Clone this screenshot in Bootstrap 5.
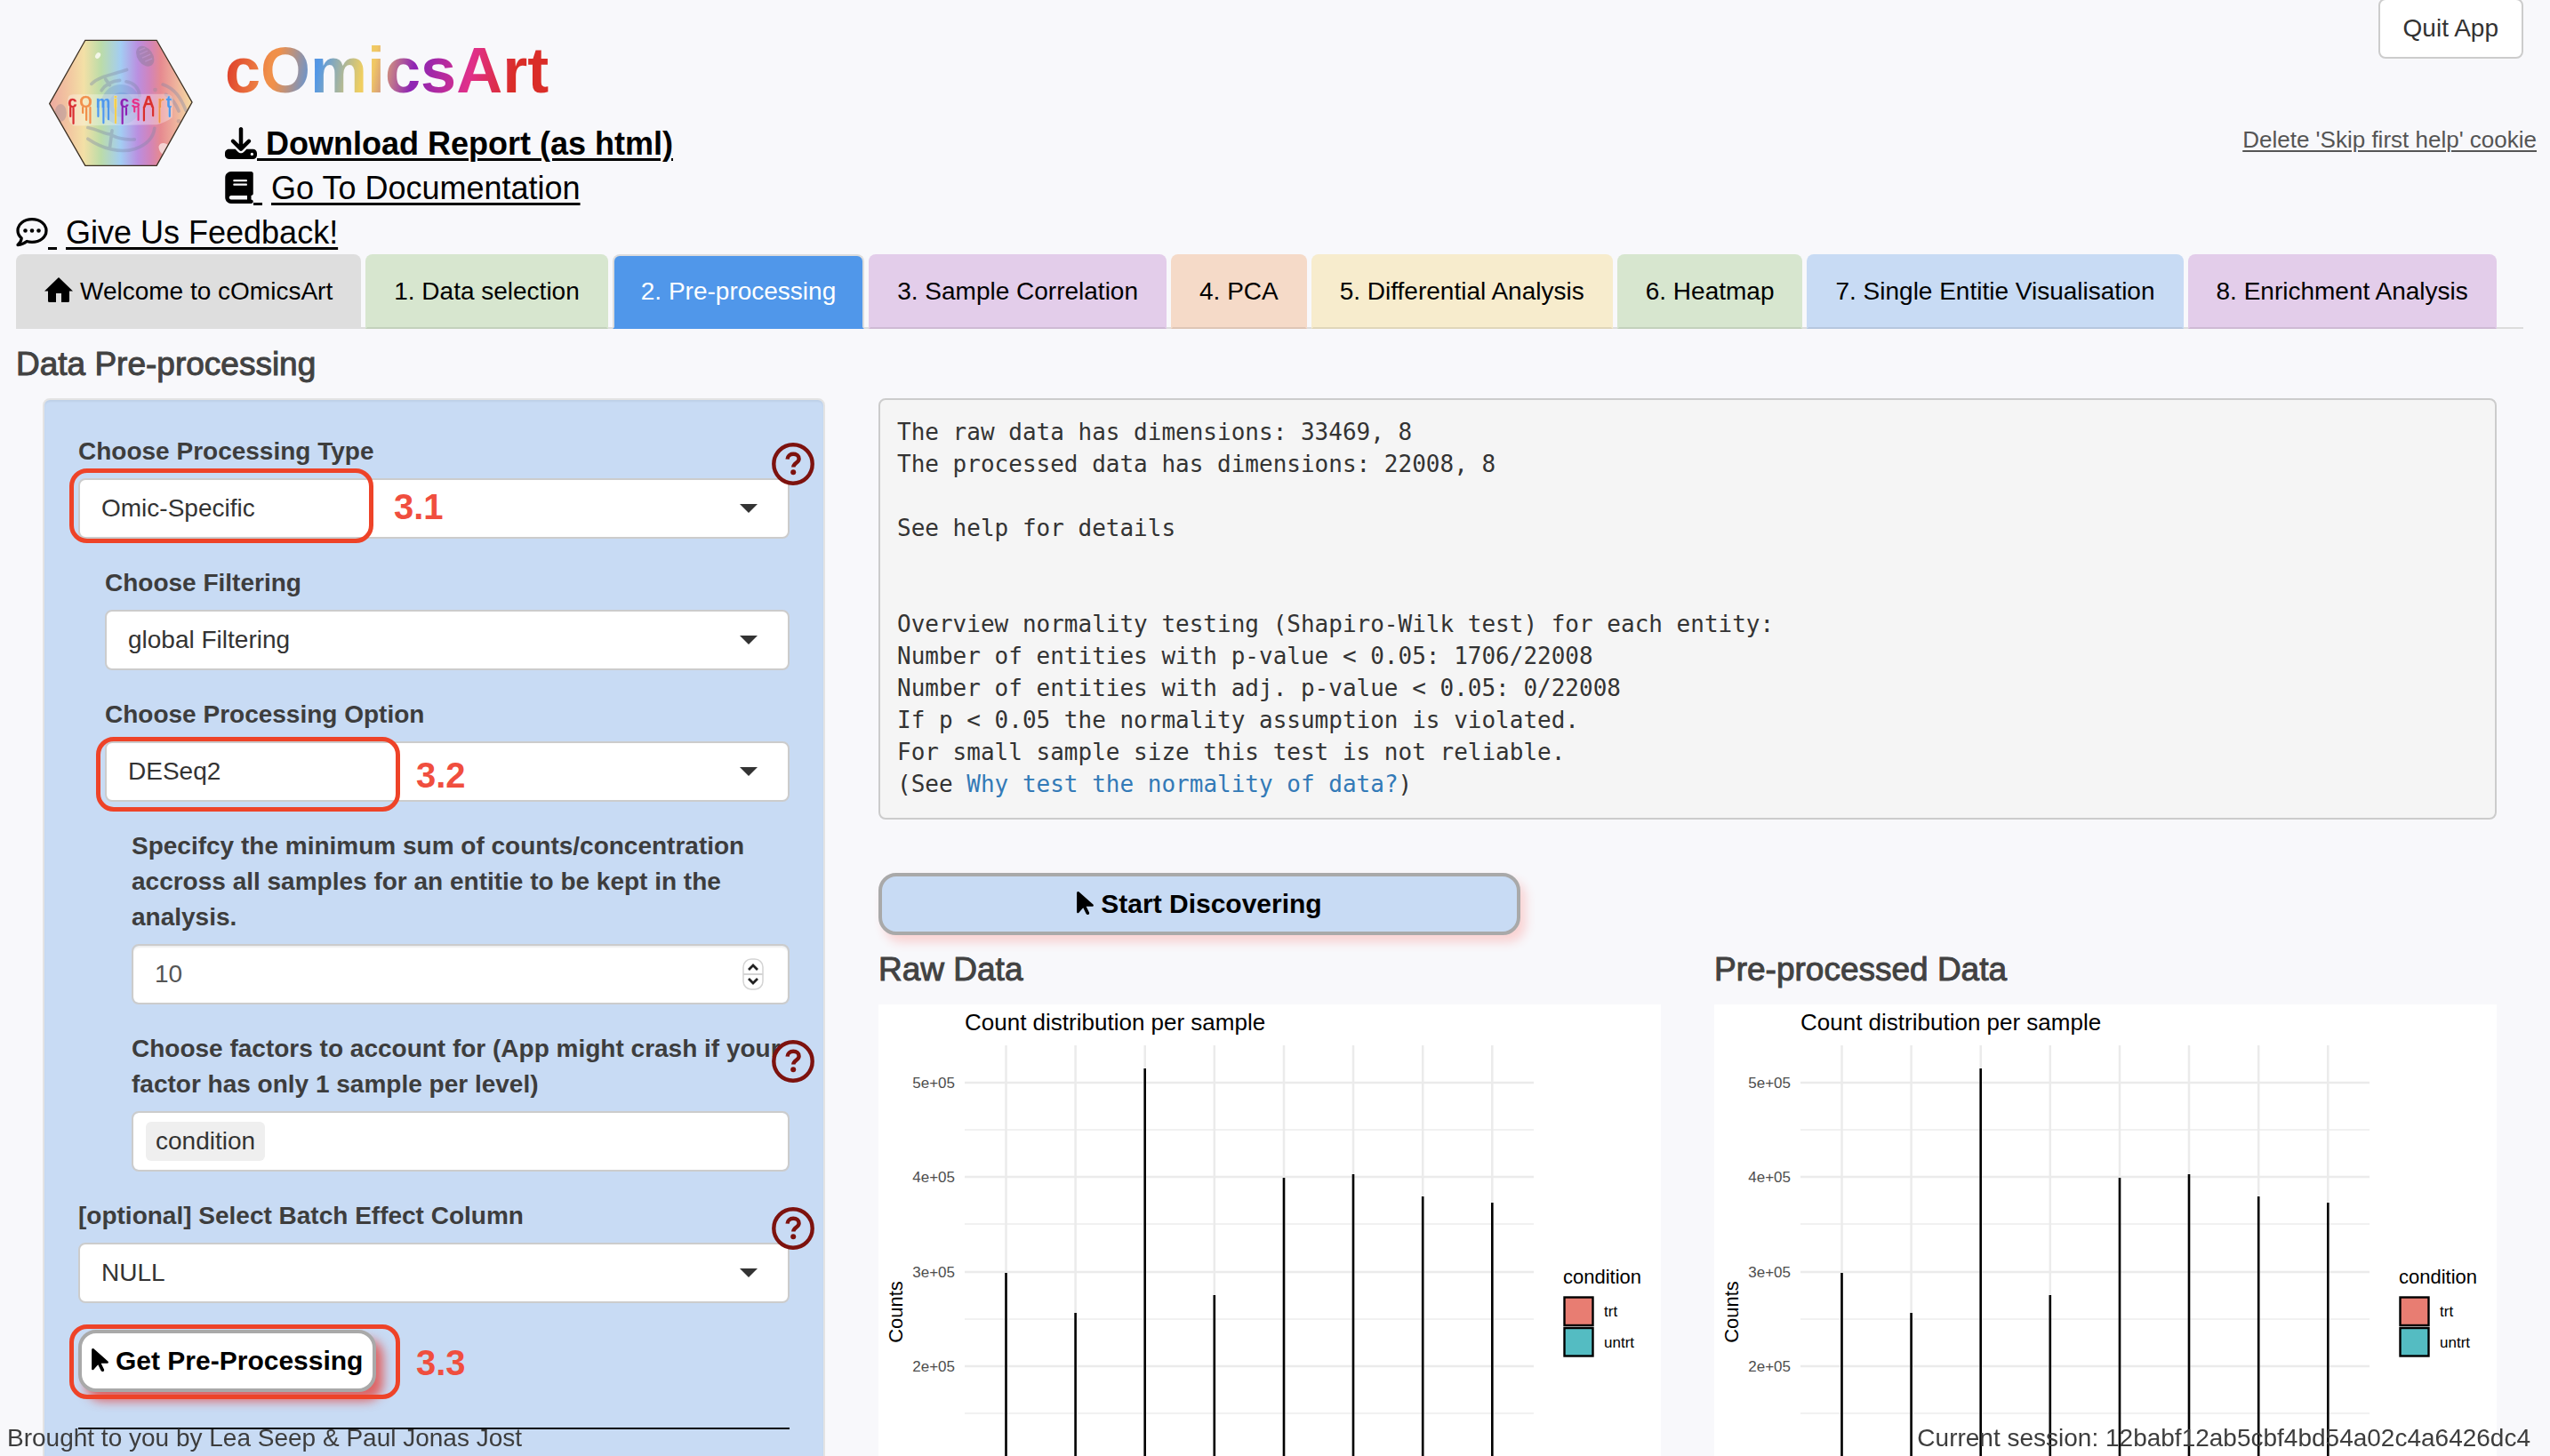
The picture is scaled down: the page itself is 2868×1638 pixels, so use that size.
<!DOCTYPE html>
<html lang="en">
<head>
<meta charset="utf-8">
<meta name="viewport" content="width=device-width, initial-scale=1">
<title>cOmicsArt</title>
<link href="https://cdn.jsdelivr.net/npm/bootstrap@5.3.0/dist/css/bootstrap.min.css" rel="stylesheet">
<style>
  body { font-family: "Liberation Sans", Arial, sans-serif; font-size: 28px; line-height: 40px; color: #3d3d3d; background: #f8f8fb; }
  .app-view { height: 100vh; overflow: hidden; }
  .app-head { padding: 0 15px 0 55px; }
  .app-logo { width: 162px; height: 144px; margin-top: 44px; margin-right: 36px; }
  .app-titles { padding-top: 40px; }
  .app-name { width: fit-content; font-size: 72px; line-height: 79px; font-weight: 700; margin-bottom: 17px; color: transparent; background: linear-gradient(100deg, #df402b 2%, #f0904a 15%, #f0904a 17%, #5096e8 29%, #f0cf60 43%, #f0c765 46%, #8e24b4 58%, #9a27ac 62%, #e0308a 75%, #da2d28 88%); -webkit-background-clip: text; background-clip: text; }
  .link-line { font-size: 36px; line-height: 52px; height: 50px; white-space: nowrap; }
  .big-link { color: #000; text-decoration-thickness: 3px; text-underline-offset: 4px; }
  .link-gap { display: inline-block; width: 10px; }
  .glyph { display: inline-block; width: 36px; height: 36px; vertical-align: -5px; fill: currentColor; }
  .glyph-book { width: 32px; }
  .app-feedback { padding-left: 18px; }
  .btn-quit { --bs-btn-font-size: 28px; --bs-btn-line-height: 40px; --bs-btn-padding-x: 26px; --bs-btn-padding-y: 12px; --bs-btn-border-width: 2px; --bs-btn-border-radius: 8px; --bs-btn-color: #333; --bs-btn-bg: #fff; --bs-btn-border-color: #ccc; margin: -2px 15px 71px 0; }
  .cookie-link { font-size: 26px; color: #555; text-decoration-thickness: 2px; text-underline-offset: 3px; }
  .app-body { padding: 0 30px 0 18px; }

  .flow-tabs { border-bottom: 2px solid #ddd; gap: 5px; flex-wrap: nowrap; }
  .flow-tabs .nav-link { padding: 20px 30px; line-height: 40px; color: #000; white-space: nowrap; border: 2px solid transparent; border-bottom-color: rgba(0,0,0,.09); border-radius: 8px 8px 0 0; margin-bottom: -2px; background-clip: border-box; background-origin: border-box; }
  .flow-tabs .tab-grey { background-color: #dedede; border-bottom-color: transparent; }
  .flow-tabs .tab-green { background-color: #d7e6cf; }
  .flow-tabs .tab-violet { background-color: #e3cdea; }
  .flow-tabs .tab-peach { background-color: #f5dac8; }
  .flow-tabs .tab-cream { background-color: #f7eccd; }
  .flow-tabs .tab-blue { background-color: #c8dbf4; }
  .flow-tabs .nav-link.active { background-color: #5097ea; color: #fff; border-color: #ddd #ddd #5097ea; }
  .home-glyph { display: inline-block; width: 32px; height: 28px; vertical-align: -3px; margin-right: 8px; }

  .head-text { font-size: 37px; line-height: 40px; font-weight: 400; color: #424242; -webkit-text-stroke: 1px currentColor; }
  .page-title { margin: 20px 0 18px; }
  .main-grid { --bs-gutter-x: 60px; margin: 0; }
  .plot-grid { --bs-gutter-x: 60px; }
  .side-well { background: #c8dbf4; border: 2px solid #e3e3e3; border-radius: 8px; padding: 38px; height: 1400px; box-shadow: inset 0 2px 2px rgba(0,0,0,.05); }
  .field { margin-bottom: 30px; }
  .field-1 { margin-left: 30px; }
  .field-2 { margin-left: 60px; }
  .field label { display: block; font-weight: 700; margin-bottom: 10px; white-space: nowrap; }
  .field .form-select, .field .form-control { height: 68px; font-size: 28px; line-height: 40px; padding: 12px 24px; border: 2px solid #ccc; border-radius: 8px; color: #333; background-color: #fff; }
  .field .form-select { background-image: url("data:image/svg+xml,%3Csvg xmlns='http://www.w3.org/2000/svg' viewBox='0 0 20 10'%3E%3Cpath d='M0 0h20L10 10z' fill='%23333'/%3E%3C/svg%3E"); background-size: 20px 10px; background-position: right 34px center; }
  .field input[type=number] { appearance: textfield; -moz-appearance: textfield; color: #555; box-shadow: inset 0 2px 2px rgba(0,0,0,.07); }
  .field input[type=number]::-webkit-inner-spin-button { display: none; }
  .spin { position: absolute; right: 29px; top: 16px; width: 24px; height: 36px; }
  .field .chip-box { padding: 10px 14px; }
  .chip { background: #efefef; border-radius: 6px; padding: 2px 11px; color: #333; }
  .chip-box input { border: 0; outline: 0; min-width: 0; background: none; }
  .help-btn { position: absolute; right: -28px; top: 10px; width: 48px; height: 48px; padding: 0; border: 0; background: none; display: block; line-height: 0; z-index: 3; }
  .go-btn { --bs-btn-font-size: 30px; --bs-btn-line-height: 42px; --bs-btn-font-weight: 700; --bs-btn-padding-x: 11px; --bs-btn-padding-y: 10px; --bs-btn-border-width: 4px; --bs-btn-border-radius: 20px; --bs-btn-color: #000; --bs-btn-bg: #fff; --bs-btn-border-color: #a9a9a9; --bs-btn-box-shadow: none; box-shadow: 8px 10px 12px rgba(232,50,40,.7); white-space: nowrap; }
  .go-btn svg { width: 19px; height: 30px; vertical-align: -4px; margin-right: 8px; }
  .go-wide { --bs-btn-bg: #c8dbf4; box-shadow: 6px 8px 12px rgba(255,60,50,.2); width: 722px; max-width: 100%; margin: 60px 0 19px; }
  .callout { position: absolute; z-index: 2; left: -10px; width: 342px; height: 84px; border: 5px solid #ee4328; border-radius: 20px; pointer-events: none; }
  .callout-no { position: absolute; z-index: 2; font-size: 40px; font-weight: 700; line-height: 40px; color: #f04e3e; pointer-events: none; }
  .c1 { top: -11px; } .n1 { left: 355px; top: 12px; }
  .c2 { top: -5px; }  .n2 { left: 350px; top: 18px; }
  .c3 { top: -6px; width: 372px; } .n3 { left: 380px; top: 17px; }
  .well-rule { border: 0; border-top: 2px solid #000; opacity: 1; margin: 40px 0 0; }

  .log { font-family: "DejaVu Sans Mono", Menlo, monospace; font-size: 26px; line-height: 36px; color: #333; background: #f5f5f5; border: 2px solid #ccc; border-radius: 8px; padding: 18px 19px 20px; margin: 0; }
  .log a { color: #337ab7; text-decoration: none; }
  .plot { display: block; width: 100%; height: auto; margin-top: 19px; background: #fff; }
  .plot text { font-family: "Liberation Sans", Arial, sans-serif; }
  .p-title { font-size: 26px; } .p-name { font-size: 22px; } .p-key { font-size: 17px; } .p-tick { font-size: 17px; fill: #4d4d4d; text-anchor: end; }
  .app-foot { padding: 0 22px 0 8px; pointer-events: none; }
  .logo-ink { filter: drop-shadow(0 0 2px #fff); }
  .logo-ink tspan { stroke-width: 1px; }
</style>
<script src="https://cdn.jsdelivr.net/npm/bootstrap@5.3.0/dist/js/bootstrap.bundle.min.js"></script>
</head>
<body>
<svg width="0" height="0" class="position-absolute" aria-hidden="true">
  <defs>
    <symbol id="pointer" viewBox="0 0 320 512"><path d="M0 55.2V426c0 12.2 9.9 22 22 22c6.3 0 12.4-2.7 16.6-7.5L121.2 346l58.1 116.3c7.9 15.8 27.1 22.2 42.9 14.3s22.2-27.1 14.3-42.9L179.8 320H297.9c12.2 0 22.1-9.9 22.1-22.1c0-6.3-2.7-12.3-7.4-16.5L38.6 37.9C34.3 34.1 28.9 32 23.2 32C10.4 32 0 42.4 0 55.2z"/></symbol>
    <symbol id="help" viewBox="0 0 48 48"><circle cx="24" cy="24" r="21.7" fill="none" stroke="#7d120e" stroke-width="4.4"/><path d="M17.6 18.6c.2-3.700 2.900-5.800 6.600-5.800 3.800 0 6.400 2.100 6.400 5.400 0 4.400-6.300 4.700-6.300 9.300" fill="none" stroke="#7d120e" stroke-width="4.400"/><circle cx="24.200" cy="33.300" r="3" fill="#7d120e"/></symbol>
    <g id="grid">
      <path d="M97 141H737M97 247H737M97 354H737M97 460H737" stroke="#ededed" stroke-width="1.500"/>
      <path d="M97 88H737M97 194H737M97 301H737M97 407H737M97 514H737M143.500 46V520M221.600 46V520M299.700 46V520M377.800 46V520M456 46V520M534 46V520M612.200 46V520M690.300 46V520" stroke="#ebebeb" stroke-width="2.500"/>
      <path d="M143.500 302V520M221.600 347V520M299.700 72V520M377.800 327V520M456 195V520M534 191V520M612.200 216V520M690.300 223V520" stroke="#000" stroke-width="2.600"/>
      <rect x="771.500" y="329.500" width="32" height="31.500" fill="#e87d72" stroke="#000" stroke-width="2.400"/>
      <rect x="771.500" y="364" width="32" height="31.500" fill="#54bcc2" stroke="#000" stroke-width="2.400"/>
    </g>
  </defs>
</svg>

<div class="app-view">
  <header>
    <div class="app-head d-flex align-items-start">
      <svg class="app-logo flex-shrink-0" viewBox="44 41 488 432" role="img" aria-label="cOmicsArt logo">
        <defs>
          <linearGradient id="rain"><stop offset="0" stop-color="#eda9a0"/><stop offset=".12" stop-color="#f2c3a0"/><stop offset=".24" stop-color="#f3e0a6"/><stop offset=".36" stop-color="#bcdca8"/><stop offset=".5" stop-color="#a3cdf3"/><stop offset=".62" stop-color="#ba8fe0"/><stop offset=".7" stop-color="#d084bd"/><stop offset=".78" stop-color="#e68a90"/><stop offset=".88" stop-color="#eeb09c"/><stop offset="1" stop-color="#f3dca2"/></linearGradient>
          <clipPath id="hex"><path d="M167 44H409L529 254 409 469H167L46 259z"/></clipPath>
        </defs>
        <g clip-path="url(#hex)">
          <path d="M167 44H409L529 254 409 469H167L46 259z" fill="url(#rain)"/>
          <g fill="none" stroke="#7d86a8" stroke-opacity=".38" stroke-width="11" stroke-linecap="round">
            <path d="M188 192C215 165 262 160 308 144M236 176l14 20M222 214c18-26 40-32 62-34M306 184c26 4 42 22 46 48M176 340c40 8 60 24 76 22M258 350l-8 60M176 378c50 34 110 50 160 34 40-14 62-40 66-70M256 366c30 14 54 16 78 14M430 194c42 14 62 48 78 88M440 228c26 16 36 36 44 56"/>
          </g>
          <circle cx="288" cy="262" r="68" fill="#6f94cc" opacity=".35"/><circle cx="290" cy="262" r="42" fill="#5f86d0" opacity=".25"/>
          <ellipse cx="370" cy="98" rx="26" ry="38" transform="rotate(-35 370 98)" fill="#8c7c9c" opacity=".5"/>
          <path d="M350 78l20-8M352 92l26-12M360 104l28-12M370 116l24-10" stroke="#b98fc6" stroke-width="4"/>
          <ellipse cx="84" cy="290" rx="20" ry="30" fill="#9c8a98" opacity=".4"/><circle cx="404" cy="212" r="7" fill="#9c8a98" opacity=".4"/><circle cx="484" cy="318" r="7" fill="#9c8a98" opacity=".4"/>
          <ellipse cx="210" cy="96" rx="8" ry="11" transform="rotate(35 210 96)" fill="#f3f6e8"/>
          <path d="M416 404c6-18 28-12 36 0l-14 30c-14-4-22-16-22-30z" fill="#f6dede" opacity=".85"/>
          <path d="M108 250Q106 226 130 228L440 226Q466 226 464 252L462 306Q440 322 410 330L130 334Q112 330 110 300z" fill="#fff" opacity=".32"/>
        </g>
        <path d="M167 44H409L529 254 409 469H167L46 259z" fill="none" stroke="#3b2f22" stroke-width="4"/>
        <g class="logo-ink" font-family="Liberation Sans, Arial, sans-serif" font-weight="700" font-size="56">
          <text y="272"><tspan x="108" fill="#d92f2f" stroke="#d92f2f">c</tspan><tspan x="147" fill="#f0904a" stroke="#f0904a">O</tspan><tspan x="203" fill="#4d97ea" stroke="#4d97ea">m</tspan><tspan x="262" fill="#f2cf50" stroke="#f2cf50">i</tspan><tspan x="284" fill="#8a22b4" stroke="#8a22b4">c</tspan><tspan x="323" fill="#e0308a" stroke="#e0308a">s</tspan><tspan x="361" fill="#d92f2f" stroke="#d92f2f">A</tspan><tspan x="412" fill="#f0904a" stroke="#f0904a">r</tspan><tspan x="441" fill="#4d97ea" stroke="#4d97ea">t</tspan></text>
          <g fill="none" stroke-width="7" stroke-linecap="round">
            <path d="M117 272v30M127 274v52" stroke="#d92f2f"/><path d="M159 272v18M171 274v40M184 272v52" stroke="#f0904a"/><path d="M211 274v28M229 274v50M246 274v38" stroke="#4d97ea"/><path d="M270 274v50" stroke="#f2cf50"/><path d="M293 272v54M306 274v22" stroke="#8a22b4"/><path d="M334 272v14M347 272v42" stroke="#e0308a"/><path d="M366 274v42M397 274v26" stroke="#d92f2f"/><path d="M419 274v48" stroke="#f0904a"/><path d="M453 272v30" stroke="#4d97ea"/>
          </g>
        </g>
      </svg>
      <div class="app-titles">
        <h1 class="app-name">cOmicsArt</h1>
        <div class="link-line"><a href="#" class="big-link fw-bold"><svg class="glyph" viewBox="0 0 512 512"><path d="M288 32c0-17.700-14.300-32-32-32s-32 14.300-32 32V274.700l-73.400-73.400c-12.500-12.500-32.800-12.500-45.300 0s-12.500 32.800 0 45.300l128 128c12.500 12.500 32.800 12.500 45.300 0l128-128c12.500-12.500 12.500-32.800 0-45.300s-32.800-12.500-45.300 0L288 274.700V32zM64 352c-35.300 0-64 28.700-64 64v32c0 35.300 28.700 64 64 64H448c35.300 0 64-28.700 64-64V416c0-35.300-28.700-64-64-64H346.500l-45.300 45.300c-25 25-65.500 25-90.500 0L165.500 352H64zm368 56a24 24 0 1 1 0 48 24 24 0 1 1 0-48z"/></svg>&nbsp;Download Report (as html)</a></div>
        <div class="link-line"><a href="#" class="big-link"><svg class="glyph glyph-book" viewBox="0 0 448 512"><path d="M96 0C43 0 0 43 0 96V416c0 53 43 96 96 96H384h32c17.700 0 32-14.300 32-32s-14.300-32-32-32V384c17.700 0 32-14.300 32-32V32c0-17.700-14.300-32-32-32H384 96zm0 384H352v64H96c-17.700 0-32-14.300-32-32s14.300-32 32-32zm32-240c0-8.800 7.200-16 16-16H336c8.800 0 16 7.200 16 16s-7.200 16-16 16H144c-8.800 0-16-7.200-16-16zm16 48H336c8.800 0 16 7.200 16 16s-7.200 16-16 16H144c-8.800 0-16-7.200-16-16s7.200-16 16-16z"/></svg>&nbsp;<span class="link-gap"></span>Go To Documentation</a></div>
      </div>
      <div class="ms-auto d-flex flex-column align-items-end">
        <button type="button" class="btn btn-quit">Quit App</button>
        <a href="#" class="cookie-link">Delete 'Skip first help' cookie</a>
      </div>
    </div>
    <div class="app-feedback link-line"><a href="#" class="big-link"><svg class="glyph" viewBox="0 0 36 36"><path d="M2 32.500c2.500-2 4-4.600 4.200-7.500C3.500 22.500 2 19.600 2 16.500 2 9.100 9.200 3.700 18 3.700s16 5.400 16 12.800-7.200 12.800-16 12.800c-2 0-4-.3-5.800-.8-2.900 2.400-6.500 3.800-10.200 4z" fill="none" stroke="#000" stroke-width="3.300" stroke-linejoin="round"/><circle cx="10.500" cy="16.500" r="2.300"/><circle cx="18" cy="16.500" r="2.300"/><circle cx="25.500" cy="16.500" r="2.300"/></svg>&nbsp;<span class="link-gap"></span>Give Us Feedback!</a></div>
  </header>

  <div class="app-body">
    <ul class="nav nav-tabs flow-tabs">
      <li class="nav-item"><a class="nav-link tab-grey" href="#"><svg class="home-glyph" viewBox="0 0 32 28"><path d="M16 0 32 15.500H28V26.500Q28 28 26.500 28H19V18H13V28H5.500Q4 28 4 26.500V15.500H0z"/></svg>Welcome to cOmicsArt</a></li>
      <li class="nav-item"><a class="nav-link tab-green" href="#">1. Data selection</a></li>
      <li class="nav-item"><a class="nav-link active" href="#" aria-current="page">2. Pre-processing</a></li>
      <li class="nav-item"><a class="nav-link tab-violet" href="#">3. Sample Correlation</a></li>
      <li class="nav-item"><a class="nav-link tab-peach" href="#">4. PCA</a></li>
      <li class="nav-item"><a class="nav-link tab-cream" href="#">5. Differential Analysis</a></li>
      <li class="nav-item"><a class="nav-link tab-green" href="#">6. Heatmap</a></li>
      <li class="nav-item"><a class="nav-link tab-blue" href="#">7. Single Entitie Visualisation</a></li>
      <li class="nav-item"><a class="nav-link tab-violet" href="#">8. Enrichment Analysis</a></li>
    </ul>
    <h2 class="head-text page-title">Data Pre-processing</h2>

    <div class="row main-grid">
      <div class="col-4">
        <form class="side-well">
          <div class="field position-relative">
            <label for="ptype">Choose Processing Type</label>
            <button type="button" class="help-btn" aria-label="Help"><svg width="48" height="48"><use href="#help"/></svg></button>
            <div class="position-relative">
              <select id="ptype" class="form-select"><option>Omic-Specific</option></select>
              <span class="callout c1"></span><span class="callout-no n1">3.1</span>
            </div>
          </div>
          <div class="field field-1">
            <label for="filt">Choose Filtering</label>
            <select id="filt" class="form-select"><option>global Filtering</option></select>
          </div>
          <div class="field field-1">
            <label for="popt">Choose Processing Option</label>
            <div class="position-relative">
              <select id="popt" class="form-select"><option>DESeq2</option></select>
              <span class="callout c2"></span><span class="callout-no n2">3.2</span>
            </div>
          </div>
          <div class="field field-2">
            <label for="minsum">Specifcy the minimum sum of counts/concentration<br>accross all samples for an entitie to be kept in the<br>analysis.</label>
            <div class="position-relative">
              <input id="minsum" type="number" class="form-control" value="10">
              <svg class="spin" viewBox="0 0 24 36" aria-hidden="true"><rect x="1" y="1" width="22" height="34" rx="9" fill="#fff" stroke="#d4d4d4" stroke-width="1.500"/><path d="M1 18H23" stroke="#d4d4d4" stroke-width="2"/><path d="M7 13l5-5 5 5M7 23l5 5 5-5" fill="none" stroke="#222" stroke-width="2.800"/></svg>
            </div>
          </div>
          <div class="field position-relative">
            <button type="button" class="help-btn" aria-label="Help"><svg width="48" height="48"><use href="#help"/></svg></button>
            <div class="field-2">
              <label for="factors">Choose factors to account for (App might crash if your<br>factor has only 1 sample per level)</label>
              <div class="form-control chip-box d-flex"><span class="chip">condition</span><input id="factors" type="text" class="flex-grow-1"></div>
            </div>
          </div>
          <div class="field position-relative">
            <label for="batch">[optional] Select Batch Effect Column</label>
            <button type="button" class="help-btn" aria-label="Help"><svg width="48" height="48"><use href="#help"/></svg></button>
            <select id="batch" class="form-select"><option>NULL</option></select>
          </div>
          <div class="position-relative d-flex">
            <button type="button" class="btn go-btn"><svg><use href="#pointer"/></svg>Get Pre-Processing</button>
            <span class="callout c3"></span><span class="callout-no n3">3.3</span>
          </div>
          <hr class="well-rule">
        </form>
      </div>

      <div class="col-8">
<pre class="log">The raw data has dimensions: 33469, 8
The processed data has dimensions: 22008, 8

See help for details


Overview normality testing (Shapiro-Wilk test) for each entity:
Number of entities with p-value &lt; 0.05: 1706/22008
Number of entities with adj. p-value &lt; 0.05: 0/22008
If p &lt; 0.05 the normality assumption is violated.
For small sample size this test is not reliable.
(See <a href="#">Why test the normality of data?</a>)</pre>
        <button type="button" class="btn go-btn go-wide d-block"><svg><use href="#pointer"/></svg>Start Discovering</button>
        <div class="row plot-grid">
          <div class="col-6">
            <h2 class="head-text mb-0">Raw Data</h2>
            <svg class="plot" viewBox="0 0 880 520">
              <use href="#grid"/>
              <text class="p-title" x="97" y="29">Count distribution per sample</text>
              <text class="p-tick" x="86" y="94">5e+05</text><text class="p-tick" x="86" y="200">4e+05</text><text class="p-tick" x="86" y="307">3e+05</text><text class="p-tick" x="86" y="413">2e+05</text><text class="p-tick" x="86" y="520">1e+05</text>
              <text class="p-name" transform="translate(27 346) rotate(-90)" text-anchor="middle">Counts</text>
              <text class="p-name" x="770" y="314">condition</text>
              <text class="p-key" x="816" y="351">trt</text><text class="p-key" x="816" y="386">untrt</text>
            </svg>
          </div>
          <div class="col-6">
            <h2 class="head-text mb-0">Pre-processed Data</h2>
            <svg class="plot" viewBox="0 0 880 520">
              <use href="#grid"/>
              <text class="p-title" x="97" y="29">Count distribution per sample</text>
              <text class="p-tick" x="86" y="94">5e+05</text><text class="p-tick" x="86" y="200">4e+05</text><text class="p-tick" x="86" y="307">3e+05</text><text class="p-tick" x="86" y="413">2e+05</text><text class="p-tick" x="86" y="520">1e+05</text>
              <text class="p-name" transform="translate(27 346) rotate(-90)" text-anchor="middle">Counts</text>
              <text class="p-name" x="770" y="314">condition</text>
              <text class="p-key" x="816" y="351">trt</text><text class="p-key" x="816" y="386">untrt</text>
            </svg>
          </div>
        </div>
      </div>
    </div>
  </div>
</div>

<footer class="app-foot fixed-bottom d-flex justify-content-between">
  <span>Brought to you by Lea Seep &amp; Paul Jonas Jost</span>
  <span>Current session: 12babf12ab5cbf4bd54a02c4a6426dc4</span>
</footer>
</body>
</html>
